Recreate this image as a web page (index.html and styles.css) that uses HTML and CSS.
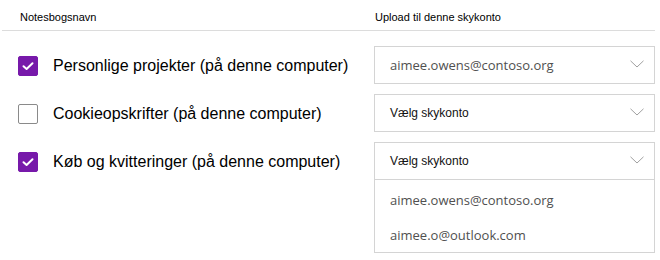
FILE: index.html
```html
<!DOCTYPE html>
<html>
<head>
<meta charset="utf-8">
<link rel="stylesheet" href="styles.css">
</head>
<body>
<div class="page">
  <div class="head">
    <div class="col-name">Notesbogsnavn</div>
    <div class="col-acct">Upload til denne skykonto</div>
  </div>
  <div class="rows">
    <div class="row">
      <div class="name">
        <span class="cb checked"><svg viewBox="0 0 20 20" width="20" height="20"><path d="M5.5 10.2 L8.6 13 L14.5 7.3" fill="none" stroke="#fff" stroke-width="2" stroke-linecap="round" stroke-linejoin="round"/></svg></span>
        <span class="label">Personlige projekter (på denne computer)</span>
      </div>
      <div class="select"><span class="val email">aimee.owens@contoso.org</span><svg class="chev" viewBox="0 0 14 8" width="14" height="8"><path d="M0.5 0.8 L7 7 L13.5 0.8" fill="none" stroke="#a0a0a0" stroke-width="1"/></svg></div>
    </div>
    <div class="row">
      <div class="name">
        <span class="cb"></span>
        <span class="label">Cookieopskrifter (på denne computer)</span>
      </div>
      <div class="select"><span class="val">Vælg skykonto</span><svg class="chev" viewBox="0 0 14 8" width="14" height="8"><path d="M0.5 0.8 L7 7 L13.5 0.8" fill="none" stroke="#a0a0a0" stroke-width="1"/></svg></div>
    </div>
    <div class="row">
      <div class="name">
        <span class="cb checked"><svg viewBox="0 0 20 20" width="20" height="20"><path d="M5.5 10.2 L8.6 13 L14.5 7.3" fill="none" stroke="#fff" stroke-width="2" stroke-linecap="round" stroke-linejoin="round"/></svg></span>
        <span class="label">Køb og kvitteringer (på denne computer)</span>
      </div>
      <div class="dropdown">
        <div class="select open"><span class="val">Vælg skykonto</span><svg class="chev" viewBox="0 0 14 8" width="14" height="8"><path d="M0.5 0.8 L7 7 L13.5 0.8" fill="none" stroke="#a0a0a0" stroke-width="1"/></svg></div>
        <div class="menu">
          <div class="opt">aimee.owens@contoso.org</div>
          <div class="opt">aimee.o@outlook.com</div>
        </div>
      </div>
    </div>
  </div>
</div>
</body>
</html>
```
FILE: styles.css
```css
* { box-sizing: border-box; }
html, body { margin: 0; padding: 0; background: #fff; }
body { font-family: "Liberation Sans", Arial, sans-serif; color: #000; }
.page { width: 660px; height: 260px; padding: 0 5px 0 2px; }
.head {
  display: grid;
  grid-template-columns: 372px 281px;
  height: 31px;
  border-bottom: 1px solid #dcdcdc;
  font-size: 11px;
  align-items: center;
  padding-top: 3px;
}
.col-name { padding-left: 18px; }
.col-acct { padding-left: 1px; }
.rows { display: flex; flex-direction: column; gap: 10px; padding-top: 15px; }
.row {
  display: grid;
  grid-template-columns: 372px 281px;
  align-items: start;
}
.name { display: flex; align-items: center; padding-left: 16px; height: 38px; }
.cb {
  width: 20px; height: 20px;
  border: 1px solid #8a8a8a;
  border-radius: 2px;
  display: flex;
  margin-top: 2px;
}
.cb.checked { background: #7719aa; border-color: #7719aa; }
.cb svg { display: block; margin: -1px; }
.label { font-size: 16px; margin-left: 15px; margin-top: 2px; }
.select {
  height: 38px;
  border: 1px solid #d4d4d4;
  display: flex;
  align-items: center;
  justify-content: space-between;
  padding: 0 10px 0 15px;
}
.val { font-size: 12px; color: #111; }
.val.email, .opt { font-family: "Open Sans", sans-serif; font-size: 13px; color: #505050; }
.chev { display: block; margin-top: -3px; }
.dropdown { display: flex; flex-direction: column; }
.menu {
  border: 1px solid #d4d4d4;
  border-top: none;
  padding: 3px 0 0 15px;
  height: 73px;
}
.opt { height: 35px; line-height: 35px; }
```
